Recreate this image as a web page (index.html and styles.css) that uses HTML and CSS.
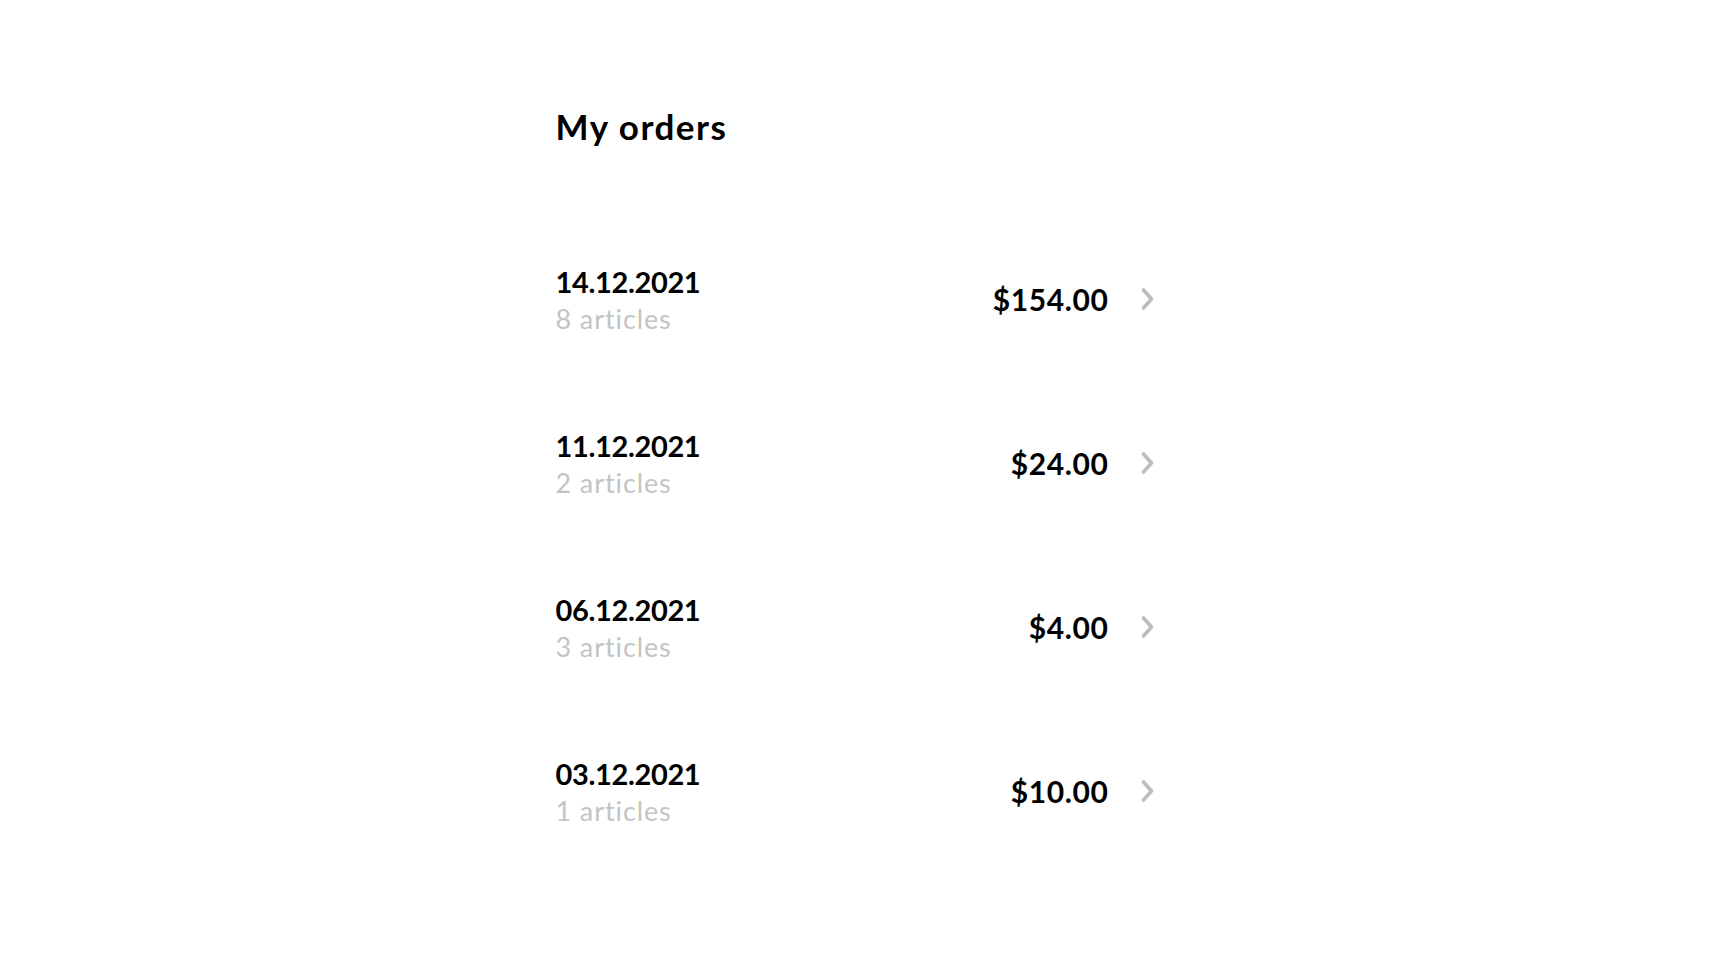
FILE: index.html
```html
<!DOCTYPE html>
<html lang="en">
<head>
<meta charset="utf-8">
<title>My orders</title>
<link rel="stylesheet" href="styles.css">
</head>
<body>
<main class="page">
  <h1 class="title">My orders</h1>
  <ul class="orders">
    <li class="order">
      <div class="info">
        <div class="date">14.12.2021</div>
        <div class="count">8 articles</div>
      </div>
      <div class="price">$154.00</div>
      <svg class="chev" viewBox="0 0 13 24" width="13" height="24"><path d="M2.5 3 L10.5 12 L2.5 21" fill="none" stroke="currentColor" stroke-width="3.6" stroke-linecap="round" stroke-linejoin="round"/></svg>
    </li>
    <li class="order">
      <div class="info">
        <div class="date">11.12.2021</div>
        <div class="count">2 articles</div>
      </div>
      <div class="price">$24.00</div>
      <svg class="chev" viewBox="0 0 13 24" width="13" height="24"><path d="M2.5 3 L10.5 12 L2.5 21" fill="none" stroke="currentColor" stroke-width="3.6" stroke-linecap="round" stroke-linejoin="round"/></svg>
    </li>
    <li class="order">
      <div class="info">
        <div class="date">06.12.2021</div>
        <div class="count">3 articles</div>
      </div>
      <div class="price">$4.00</div>
      <svg class="chev" viewBox="0 0 13 24" width="13" height="24"><path d="M2.5 3 L10.5 12 L2.5 21" fill="none" stroke="currentColor" stroke-width="3.6" stroke-linecap="round" stroke-linejoin="round"/></svg>
    </li>
    <li class="order">
      <div class="info">
        <div class="date">03.12.2021</div>
        <div class="count">1 articles</div>
      </div>
      <div class="price">$10.00</div>
      <svg class="chev" viewBox="0 0 13 24" width="13" height="24"><path d="M2.5 3 L10.5 12 L2.5 21" fill="none" stroke="currentColor" stroke-width="3.6" stroke-linecap="round" stroke-linejoin="round"/></svg>
    </li>
  </ul>
</main>
</body>
</html>
```
FILE: styles.css
```css
html, body {
  margin: 0;
  padding: 0;
  background: #ffffff;
}
body {
  font-family: "Lato", "Open Sans", "Liberation Sans", sans-serif;
  color: #000;
}
.page {
  width: 600px;
  margin: 0 auto;
  padding-top: 106px;
}
.title {
  margin: 0;
  font-size: 35px;
  line-height: 40px;
  font-weight: 700;
  letter-spacing: 1.5px;
}
.orders {
  list-style: none;
  margin: 68px 0 0;
  padding: 0;
}
.order {
  display: flex;
  align-items: center;
  height: 164px;
}
.info {
  flex: 1;
  display: flex;
  flex-direction: column;
}
.date {
  font-size: 29px;
  line-height: 39px;
  font-weight: 700;
  letter-spacing: -0.35px;
}
.count {
  font-size: 27px;
  line-height: 30px;
  font-weight: 400;
  letter-spacing: 0.9px;
  color: #c4c4c4;
  margin-top: 3px;
  margin-bottom: -3px;
}
.price {
  font-size: 30px;
  line-height: 36px;
  font-weight: 700;
  letter-spacing: 0.6px;
  padding-top: 6px;
}
.chev {
  color: #bdbdbd;
  margin-left: 32px;
  margin-right: 2px;
  margin-top: 6px;
}
```
